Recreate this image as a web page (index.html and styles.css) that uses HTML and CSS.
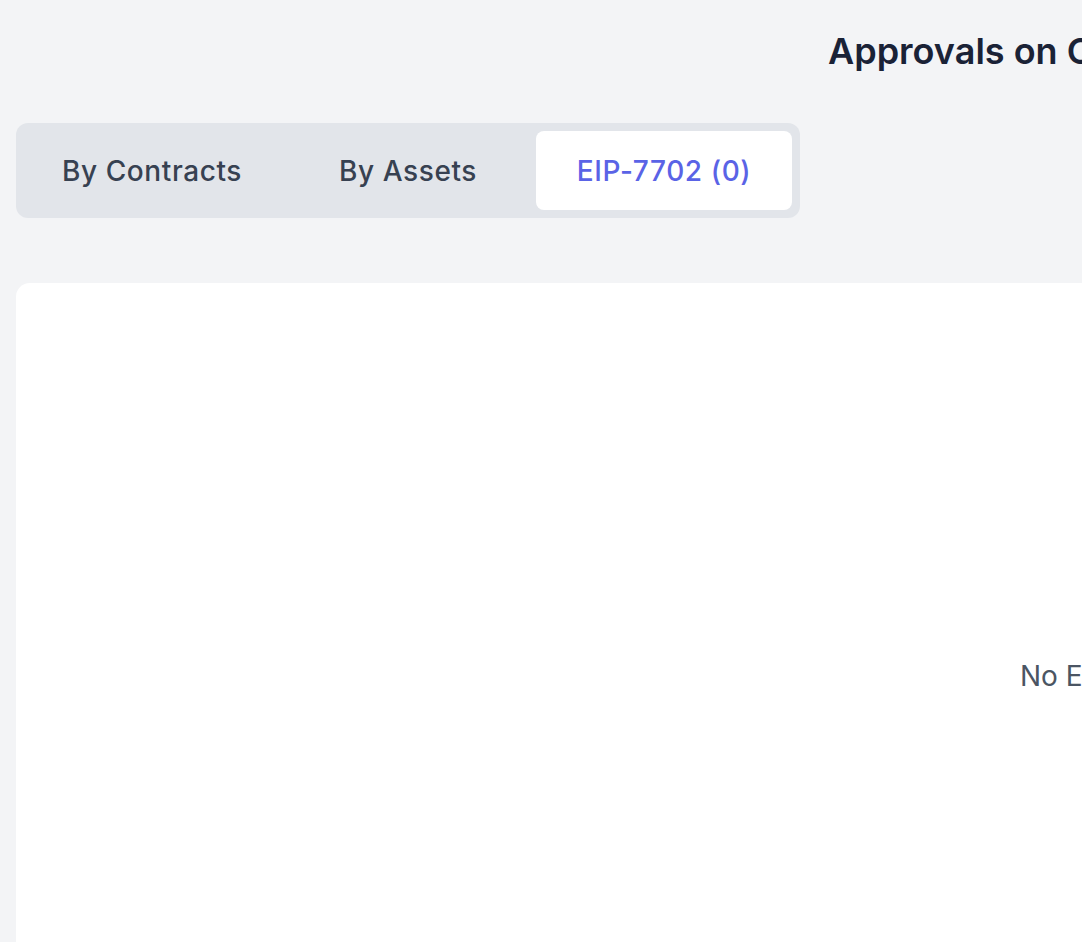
FILE: index.html
```html
<!DOCTYPE html>
<html lang="en">
<head>
<meta charset="utf-8">
<title>Approvals</title>
<link rel="stylesheet" href="styles.css">
</head>
<body>
<div class="page">
  <header class="header">
    <h1 class="title">Approvals on Chain</h1>
  </header>
  <nav class="tabs">
    <button class="tab">By Contracts</button>
    <button class="tab">By Assets</button>
    <button class="tab tab-active">EIP-7702 (0)</button>
  </nav>
  <section class="card">
    <p class="empty">No EIP-7702 authorizations found</p>
  </section>
</div>
</body>
</html>
```

FILE: styles.css
```css
* { box-sizing: border-box; }
html, body {
  margin: 0;
  padding: 0;
  overflow: hidden;
  background: #f3f4f6;
  font-family: Inter, "Noto Sans", "Liberation Sans", sans-serif;
}
.page {
  width: 2200px;
  padding: 27px 16px 0;
}
.header {
  padding-left: 812px;
}
.title {
  margin: 0;
  font-size: 36px;
  line-height: 48px;
  font-weight: 600;
  color: #1a2236;
  white-space: nowrap;
}
.tabs {
  margin-top: 48px;
  width: 784px;
  height: 95px;
  padding: 8px;
  display: grid;
  grid-template-columns: repeat(3, 1fr);
  background: #e2e5ea;
  border-radius: 12px;
}
.tab {
  border: 0;
  background: transparent;
  font-family: inherit;
  font-size: 28px;
  line-height: 40px;
  font-weight: 500;
  letter-spacing: 0.6px;
  color: #374151;
  display: flex;
  align-items: center;
  justify-content: center;
  border-radius: 8px;
  padding: 0;
}
.tab-active {
  background: #ffffff;
  color: #5a63e6;
}
.card {
  margin-top: 65px;
  height: 900px;
  background: #ffffff;
  border-radius: 14px;
  padding: 373px 0 0 1004px;
}
.empty {
  margin: 0;
  font-size: 28px;
  line-height: 40px;
  color: #4b5563;
  white-space: nowrap;
}
```
